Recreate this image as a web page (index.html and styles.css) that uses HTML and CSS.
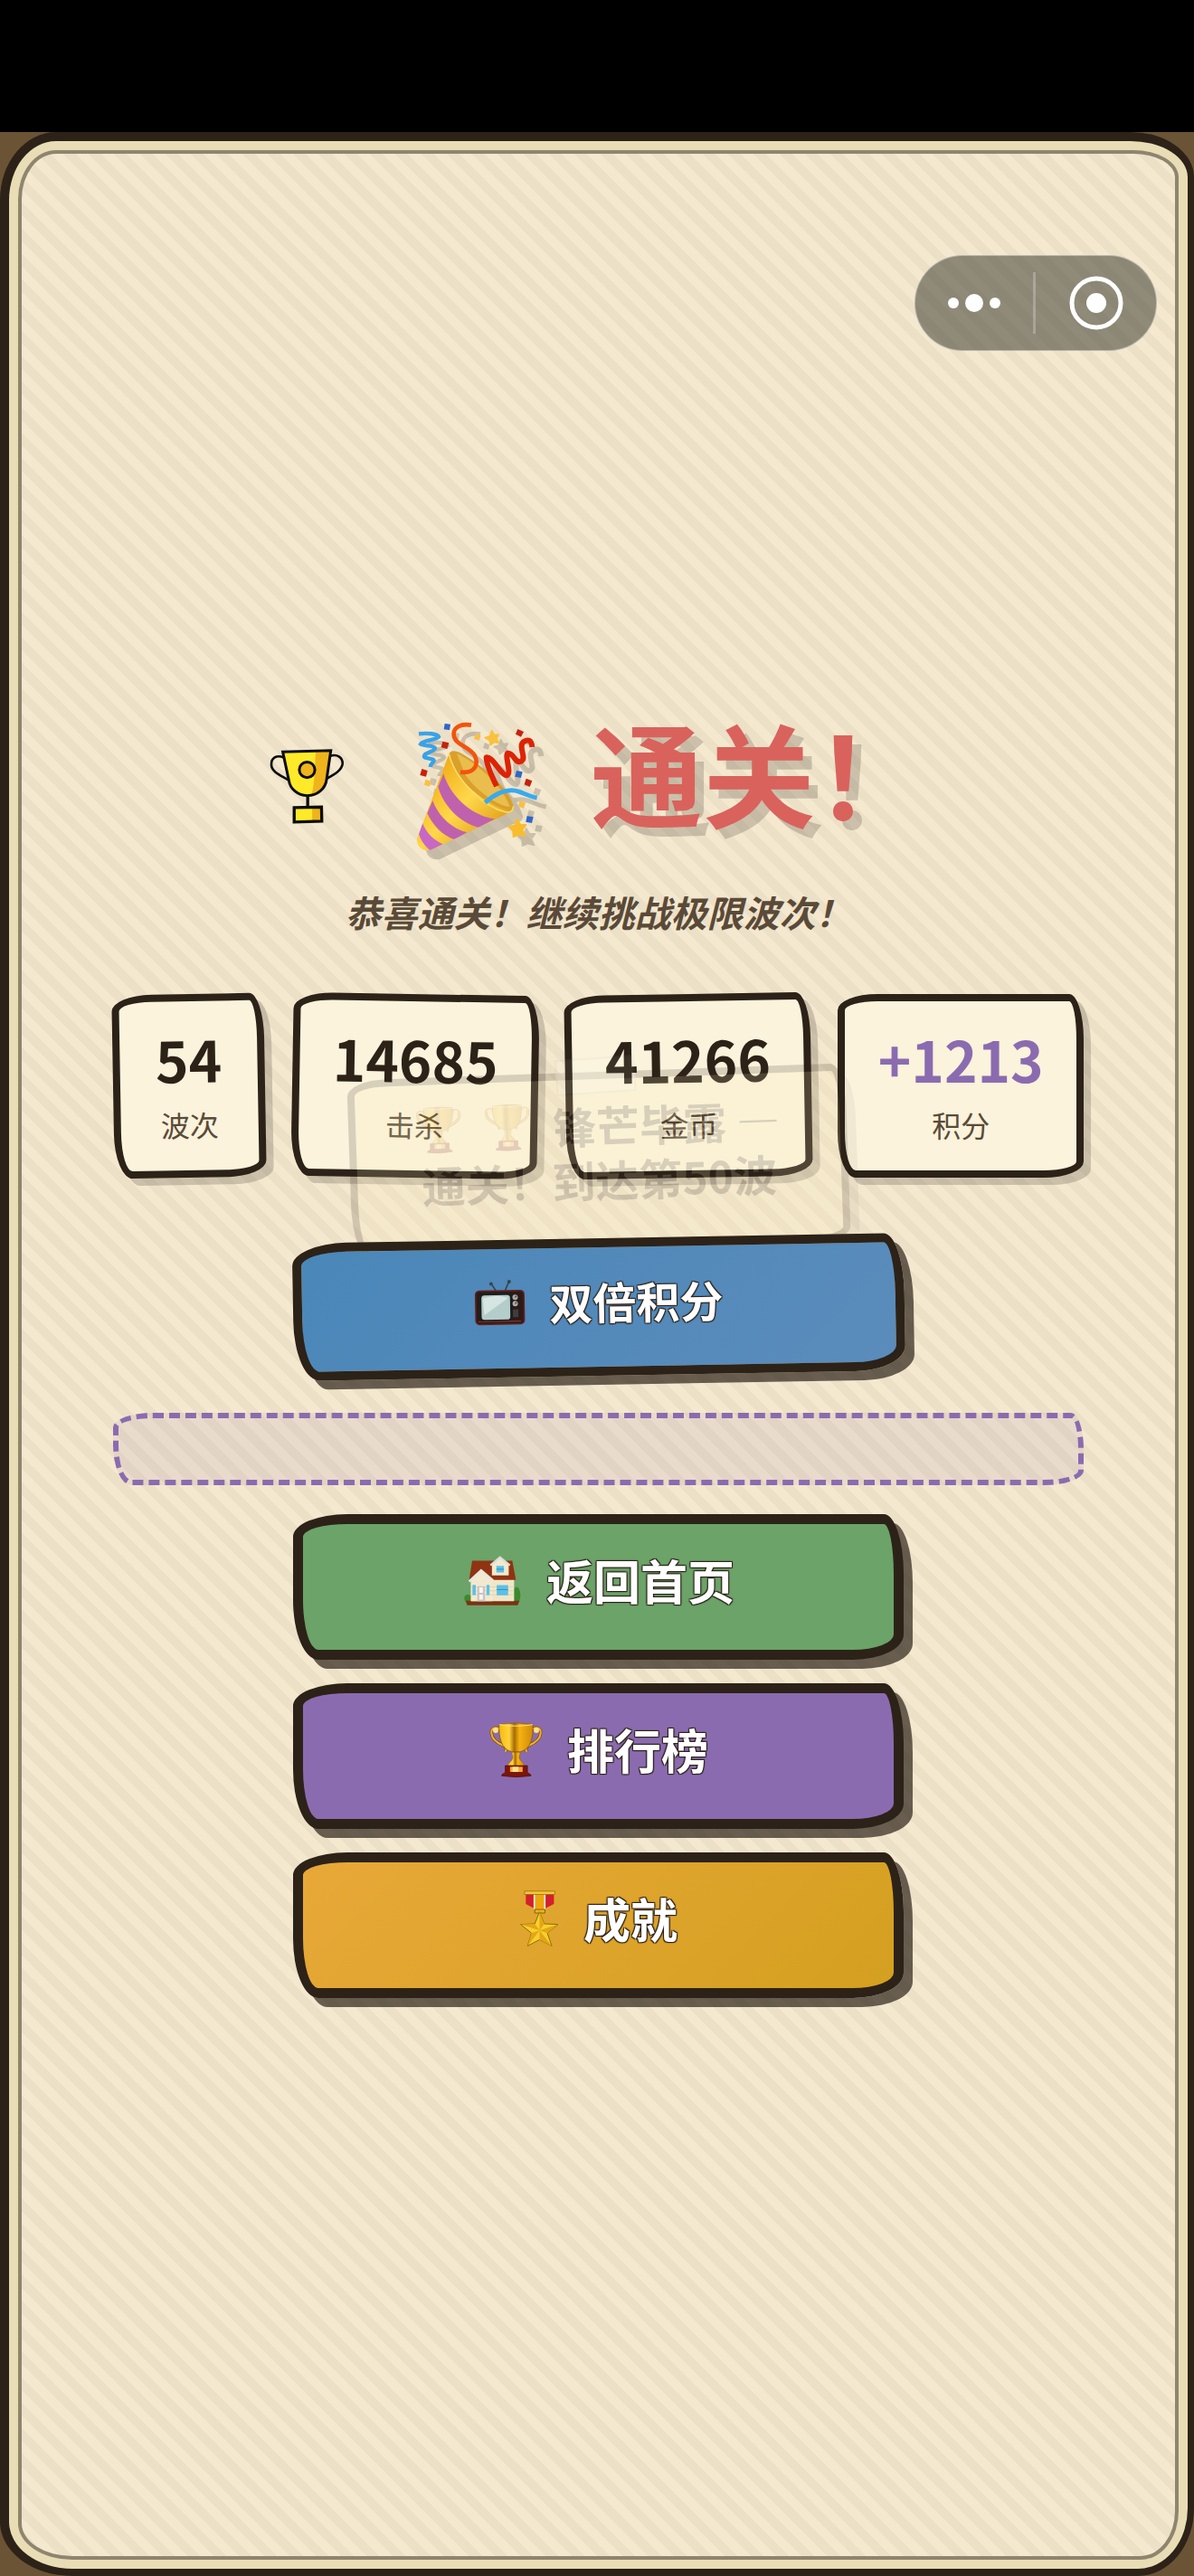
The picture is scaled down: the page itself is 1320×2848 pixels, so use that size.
FILE: index.html
```html
<!DOCTYPE html>
<html lang="zh-CN">
<head>
  <meta charset="UTF-8">
  <meta name="viewport" content="width=device-width, initial-scale=1.0">
  <title>通关！</title>
  <link rel="stylesheet" href="styles.css">
</head>
<body>

  <!-- Shared icon: gold cup -->
  <svg class="defs" width="0" height="0" aria-hidden="true">
    <defs>
      <linearGradient id="gold" x1="0" x2="1" y1="0" y2="0">
        <stop offset="0" stop-color="#f7b90f"/>
        <stop offset="0.3" stop-color="#ffd43a"/>
        <stop offset="0.45" stop-color="#a86a05"/>
        <stop offset="0.6" stop-color="#f5b310"/>
        <stop offset="1" stop-color="#d08a08"/>
      </linearGradient>
      <symbol id="cup" viewBox="712 734 184 190">
        <path d="M752 762c-14-12-32-6-30 12 2 22 20 32 38 40 12 6 14 14 8 22M856 762c14-12 32-6 30 12-2 22-20 32-38 40-12 6-14 14-8 22" fill="none" stroke="#7a4a08" stroke-width="10"/>
        <path d="M752 762c-14-12-32-6-30 12 2 22 20 32 38 40 12 6 14 14 8 22M856 762c14-12 32-6 30 12-2 22-20 32-38 40-12 6-14 14-8 22" fill="none" stroke="#f0b52a" stroke-width="6"/>
        <circle cx="736" cy="764" r="9" fill="#ffe08a"/>
        <circle cx="872" cy="764" r="9" fill="#ffe08a"/>
        <path d="M748 744q56-8 112 0c2 40-4 82-42 92h-28c-38-10-44-52-42-92z" fill="url(#gold)" stroke="#7a4a08" stroke-width="2"/>
        <path d="M748 745q56 10 112 0" fill="none" stroke="#ffe27a" stroke-width="3"/>
        <path d="M790 837h28c0 12-6 14-2 22 4 10 14 14 16 24h-56c2-10 12-14 16-24 4-8-2-10-2-22z" fill="url(#gold)" stroke="#9a6408" stroke-width="2"/>
        <path d="M768 882h74v24c6 2 12 4 12 10q-50 8-98 0c0-6 6-8 12-10z" fill="#7b150a" stroke="#4a0a05" stroke-width="2"/>
        <path d="M784 886h42v17h-42z" fill="#f3a83a"/>
        <path d="M792 886h20v17h-20z" fill="#ffe08a"/>
      </symbol>
    </defs>
  </svg>

  <div class="status-bar"></div>

  <main class="frame">
    <div class="sheet">

      <!-- Mini program capsule -->
      <div class="capsule">
        <button class="capsule-btn more" aria-label="更多">
          <svg width="60" height="60" viewBox="0 0 60 60"><circle cx="7" cy="30" r="6" fill="#fff"/><circle cx="30" cy="30" r="10" fill="#fff"/><circle cx="53" cy="30" r="6" fill="#fff"/></svg>
        </button>
        <button class="capsule-btn close" aria-label="关闭">
          <svg width="60" height="60" viewBox="0 0 60 60"><circle cx="30" cy="30" r="27" fill="none" stroke="#fff" stroke-width="5"/><circle cx="30" cy="30" r="11" fill="#fff"/></svg>
        </button>
      </div>

      <!-- Title -->
      <div class="title-row">
        <svg class="title-cup" width="83" height="86" viewBox="68 168 250 258" aria-hidden="true">
          <path d="M115 202c-24-10-42 2-41 24 0 24 32 36 58 52M270 197c24-8 42 6 41 26-2 22-28 36-54 50" fill="none" stroke="#0d0d0a" stroke-width="8"/>
          <path d="M112 183l160-4-14 96c-4 32-32 54-64 54s-58-22-62-52z" fill="#ffea29"/>
          <path d="M222 180l50-1-14 96c-4 32-26 46-52 53 12-20 12-90 16-148z" fill="#efb41c"/>
          <path d="M112 183l160-4-14 96c-4 32-32 54-64 54s-58-22-62-52z" fill="none" stroke="#0d0d0a" stroke-width="9"/>
          <circle cx="193" cy="243" r="26" fill="#efb41c" stroke="#0d0d0a" stroke-width="9"/>
          <path d="M195 330v36" stroke="#0d0d0a" stroke-width="10"/>
          <path d="M150 369l91-2 1 47-92 3z" fill="#ffea29"/>
          <path d="M210 368h31l1 46h-32z" fill="#efb41c"/>
          <path d="M150 369l91-2 1 47-92 3z" fill="none" stroke="#0d0d0a" stroke-width="10"/>
        </svg>
        <svg class="party" width="144" height="154" viewBox="552 81 432 462" aria-hidden="true">
          <defs>
            <linearGradient id="cone" x1="0" x2="1" y1="0" y2="1">
              <stop offset="0.2" stop-color="#f2b01e"/>
              <stop offset="0.5" stop-color="#ffd84a"/>
              <stop offset="0.9" stop-color="#d98f0c"/>
            </linearGradient>
            <clipPath id="coneClip"><path d="M664 190c20 80 110 170 212 190L604 510c-28 6-50-14-46-40z"/></clipPath>
          </defs>
          <path d="M664 190c8-14 30-10 60 10 70 44 140 110 153 160 4 20-6 28-26 26-80-8-180-110-187-196z" fill="#d9a02a"/>
          <path d="M690 190c50 20 150 100 176 176-40 0-120-60-150-110z" fill="#e9bd4e"/>
          <g clip-path="url(#coneClip)">
            <path d="M664 190c20 80 110 170 212 190L604 510c-28 6-50-14-46-40z" fill="url(#cone)"/>
            <path d="M646 256c20 70 90 140 170 150l-54 28c-60-14-116-70-134-134z" fill="#c061ae"/>
            <path d="M610 345c18 50 60 92 114 106l-40 24c-40-12-76-50-92-88z" fill="#c061ae"/>
            <path d="M576 420c14 34 38 56 68 70l-42 20c-16-12-30-30-38-54z" fill="#c868c4"/>
          </g>
          <path d="M664 190c20 84 110 176 190 194 16 2 24-6 23-20" fill="none" stroke="#fbd96a" stroke-width="5"/>
          <path d="M564 124c30-4 62 0 66 10-8 10-54 12-60 24 10 8 44 2 48 14-4 12-38 14-36 28 6 8 34 4 32 14-2 6-10 8-12 20" fill="none" stroke="#3aa2e8" stroke-width="13"/>
          <path d="M738 95c-36-6-60 8-58 32 2 34 52 38 70 70 14 30-2 60-48 54" fill="none" stroke="#f4530c" stroke-width="14"/>
          <path d="M822 298c-16-34-34-70-34-96 20-6 48 60 68 60 18-6-10-70 4-74 20 0 22 34 42 28 24-10-12-50 10-66 12-8 26-8 28 18" fill="none" stroke="#dd2306" stroke-width="18" stroke-linejoin="round"/>
          <path d="M784 352c40-36 80-48 114-36 20 8 36 16 58 20" fill="none" stroke="#38aaf0" stroke-width="15"/>
          <path d="M806 114l8 14 14-1-7 13 8 14-15-3-12 9-3-15-15-8 16-5z" fill="#f9c23e" stroke="#f9c23e" stroke-width="6" stroke-linejoin="round"/>
          <path d="M890 408l11 18 18 0-12 16 9 21-22-6-16 8-1-19-14-14 20-4z" fill="#f9bd2c" stroke="#f9bd2c" stroke-width="6" stroke-linejoin="round"/>
          <g fill="#2e66cc"><path d="M650 90l19 2-3 20-19-3zM888 246l20 4-5 20-20-4zM923 396l21 4-5 20-20-4z"/></g>
          <g fill="#c6220e"><path d="M643 149l21 5-6 20-20-5zM892 108l20 9-9 17-18-9zM574 240l19 6-5 20-20-5zM920 272l20 8-8 19-18-7z"/></g>
          <g fill="#f9bf45"><path d="M753 123l17 7-6 16-17-5zM586 275l19 6-5 18-18-6zM899 346l19 6-6 19-18-6z"/></g>
        </svg>
        <h1 class="title">通关！</h1>
      </div>
      <p class="subtitle">恭喜通关！继续挑战极限波次！</p>

      <!-- Stats -->
      <div class="stats">
        <div class="stat tilt-left">
          <span class="stat-value">54</span>
          <span class="stat-label">波次</span>
        </div>
        <div class="stat tilt-right">
          <span class="stat-value">14685</span>
          <span class="stat-label">击杀</span>
        </div>
        <div class="stat tilt-left">
          <span class="stat-value">41266</span>
          <span class="stat-label">金币</span>
        </div>
        <div class="stat">
          <span class="stat-value score">+1213</span>
          <span class="stat-label">积分</span>
        </div>

        <!-- Achievement toast, fading out -->
        <div class="toast">
          <div class="toast-line">
            <svg width="52" height="58" aria-hidden="true"><use href="#cup"/></svg>
            <svg width="52" height="58" aria-hidden="true"><use href="#cup"/></svg>
            <span>锋芒毕露 —</span>
          </div>
          <div class="toast-line">通关！到达第50波</div>
        </div>
      </div>

      <!-- Actions -->
      <button class="btn blue">
        <svg width="57" height="52" viewBox="676 200 171 156" aria-hidden="true">
          <path d="M750 240l-15-24M780 240l13-30" stroke="#37474b" stroke-width="5"/>
          <circle cx="734" cy="216" r="6" fill="#37474b"/><circle cx="794" cy="210" r="6" fill="#37474b"/>
          <rect x="682" y="240" width="160" height="110" rx="12" fill="#2b1a18" stroke="#5f211c" stroke-width="5"/>
          <path d="M690 341h142" stroke="#7c3029" stroke-width="4"/>
          <rect x="693" y="248" width="110" height="91" rx="8" fill="#1c1f1f"/>
          <rect x="701" y="254" width="95" height="81" rx="10" fill="#b4cdca"/>
          <path d="M706 264q44-14 84 0l-80 56z" fill="#d5e5e1"/>
          <circle cx="813" cy="262" r="9" fill="#a9aaa5"/><circle cx="813" cy="283" r="9" fill="#a9aaa5"/>
          <path d="M813 262l5-5M813 283l5-5" stroke="#333" stroke-width="3"/>
          <rect x="805" y="302" width="18" height="26" fill="#3e3e3c"/>
        </svg>
        双倍积分
      </button>

      <div class="bonus"></div>

      <div class="actions">
        <button class="btn green">
          <svg width="67" height="59" viewBox="622 180 200 178" aria-hidden="true">
            <circle cx="640" cy="328" r="12" fill="#3c8a2b"/><ellipse cx="802" cy="318" rx="13" ry="28" fill="#3c8a2b"/>
            <path d="M632 336h180l-6 15H638z" fill="#7b3213"/>
            <path d="M650 256h144v82H650z" fill="#efe6c8"/>
            <path d="M654 203h134l12 64H644z" fill="#8f3310"/>
            <path d="M720 214l27-22 29 22v38h-56z" fill="#f2e9ce"/>
            <path d="M715 218l32-27 33 27" fill="none" stroke="#dcdcd8" stroke-width="7"/>
            <path d="M650 268l34-32 38 32v70h-72z" fill="#f2e9ce"/>
            <path d="M644 272l40-37 40 34" fill="none" stroke="#e8e6e0" stroke-width="8"/>
            <path d="M650 290h144M650 303h144M650 316h144" stroke="#d8cca8" stroke-width="2"/>
            <path d="M735 220h25v22h-25zM736 284h38v34h-38zM655 283h11v34h-11zM702 283h10v34h-10z" fill="#5cc0e6"/>
            <path d="M735 231h25M736 299h38" stroke="#2f93c4" stroke-width="3"/>
            <path d="M671 288h26v50h-26z" fill="#c9c5c2"/><path d="M678 292h12v18h-12zM678 316h12v16h-12z" fill="#f7f5f2"/>
          </svg>
          返回首页
        </button>
        <button class="btn purple">
          <svg width="61" height="63" aria-hidden="true"><use href="#cup"/></svg>
          排行榜
        </button>
        <button class="btn orange">
          <svg width="45" height="64" viewBox="818 452 136 192" aria-hidden="true">
            <path d="M840 466h94v34l-36 18h-24l-34-18z" fill="#d3202c"/>
            <path d="M866 466h40v51h-40z" fill="#f3eee6"/><path d="M871 466h30v52h-30z" fill="#eda60c"/>
            <rect x="836" y="457" width="101" height="11" fill="#f3c73a" stroke="#8a6208" stroke-width="2"/>
            <path d="M870 518h34v12h-34z" fill="#e8b52a" stroke="#8a6208" stroke-width="3"/>
            <path d="M886 526l16 40 46 2-36 29 15 43-41-21-40 21 13-43-36-29 47-2z" fill="#f8cf2c" stroke="#8a6a08" stroke-width="3"/>
            <path d="M886 588v-62l16 40zM886 588l62-20-36 29zM886 588l41 52-41-21zM886 588l-40 52 13-43zM886 588l-63-20 47-2z" fill="#e2a616"/>
          </svg>
          成就
        </button>
      </div>

    </div>
  </main>

</body>
</html>
```
FILE: styles.css
```css
* {
  box-sizing: border-box;
}

body {
  display: flex;
  flex-direction: column;
  min-height: 100vh;
  margin: 0;
  background-color: #6b5335;
  color: #2c2218;
  font-family: "Noto Sans CJK SC", sans-serif;
}

.defs {
  position: absolute;
}

.status-bar {
  height: 146px;
  background-color: #000;
}

/* Hand-drawn paper frame */
.frame {
  flex: 1;
  display: flex;
  padding: 10px;
  background-color: #e9ddb5;
  border: 10px solid #2c2218;
  border-right-width: 7px;
  border-bottom-width: 8px;
  border-radius: 62px 70px 62px 80px / 75px 50px 75px 60px;
}

.sheet {
  position: relative;
  flex: 1;
  display: flex;
  flex-direction: column;
  align-items: center;
  justify-content: center;
  padding: 0 101px;
  background-color: #f4e8cf;
  background-image: repeating-linear-gradient(45deg, transparent 0 10px, #ece0c7 10px 20px);
  border: 4px solid #8f856f;
  border-radius: 42px 50px 42px 60px / 54px 30px 54px 40px;
}

/* Capsule */
.capsule {
  position: absolute;
  top: 112px;
  right: 20px;
  display: flex;
  align-items: center;
  width: 268px;
  height: 106px;
  background-color: rgba(44, 44, 36, 0.5);
  border: 1px solid rgba(255, 255, 255, 0.4);
  border-radius: 53px;
}

.capsule-btn {
  height: 68px;
  padding: 4px 0;
  background: none;
  border: none;
  cursor: pointer;
}

.more {
  width: 130px;
}

.close {
  flex: 1;
  border-left: 3px solid rgba(255, 255, 255, 0.25);
}

/* Title */
.title-row {
  display: flex;
  align-items: center;
  height: 172px;
}

.title-cup {
  margin: 0 78px 10px 0;
}

.party {
  margin-right: 50px;
  overflow: visible;
  filter: drop-shadow(10px 10px 0 rgba(44, 34, 24, 0.2));
}

.title {
  align-self: flex-start;
  margin: 0;
  font-size: 124px;
  font-weight: 700;
  line-height: 128px;
  color: #d9625c;
  text-shadow: 10px 10px 0 rgba(44, 34, 24, 0.2);
}

.subtitle {
  margin: 24px 0 67px;
  font-size: 40px;
  font-weight: 700;
  font-style: italic;
  line-height: 48px;
  color: #5a4a38;
}

/* Stats */
.stats {
  position: relative;
  align-self: stretch;
  display: flex;
  gap: 30px;
  margin-bottom: 67px;
}

.stat {
  flex: 1 1 auto;
  display: flex;
  flex-direction: column;
  align-items: center;
  min-width: 168px;
  padding: 27px 32px 31px;
  background-color: #fbf3dc;
  border: 8px solid #2c2218;
  border-radius: 44px 16px 44px 20px / 18px 50px 18px 50px;
  box-shadow: 8px 8px 0 rgba(44, 34, 24, 0.2);
}

.tilt-left {
  transform: rotate(-1deg);
}

.tilt-right {
  transform: rotate(1deg);
}

.stat-value {
  font-size: 62px;
  font-weight: 700;
  line-height: 72px;
}

.score {
  color: #8b6bb0;
}

.stat-label {
  margin-top: 17px;
  font-size: 32px;
  line-height: 40px;
  color: #5a4a38;
}

.toast {
  position: absolute;
  top: 86px;
  left: 50%;
  padding: 20px 66px 42px;
  background-color: #fff0bc;
  border: 8px solid #2c2218;
  border-radius: 44px 16px 44px 20px / 18px 50px 18px 60px;
  box-shadow: 10px 10px 0 rgba(44, 34, 24, 0.3);
  font-size: 48px;
  font-weight: 700;
  line-height: 60px;
  white-space: nowrap;
  opacity: 0.17;
  transform: translateX(-50%) rotate(-2deg);
  pointer-events: none;
}

.toast::before {
  content: "";
  position: absolute;
  top: -24px;
  left: 50%;
  width: 84px;
  height: 36px;
  background-color: rgba(255, 255, 255, 0.4);
  border: 2px solid rgba(44, 34, 24, 0.2);
  transform: translateX(-50%) rotate(-2deg);
}

.toast-line {
  display: flex;
  align-items: center;
  justify-content: center;
  gap: 24px;
}

/* Buttons */
.btn {
  display: flex;
  align-items: center;
  justify-content: center;
  gap: 26px;
  width: 63%;
  height: 161px;
  padding: 0 0 14px;
  border: 11px solid #2c2218;
  border-radius: 60px 22px 56px 28px / 25px 66px 28px 66px;
  box-shadow: 10px 10px 0 rgba(44, 34, 24, 0.7);
  color: #fff;
  font-family: inherit;
  font-size: 52px;
  font-weight: 700;
  line-height: 60px;
  text-shadow: 1px 1px 1px #2c2218, -1px -1px 1px #2c2218, 1px -1px 1px #2c2218, -1px 1px 1px #2c2218;
  cursor: pointer;
}

.blue {
  height: 152px;
  border-width: 10px;
  background: linear-gradient(135deg, #4a87b9, #5b8cbb);
  font-size: 48px;
  transform: rotate(-1deg);
}

.green {
  background-color: #6ba368;
}

.purple {
  background-color: #8b6bb0;
}

.orange {
  background: linear-gradient(135deg, #e8a838, #d4a020);
}

.bonus {
  align-self: stretch;
  height: 80px;
  margin: 41px 0 32px;
  background-color: rgba(139, 107, 176, 0.1);
  border: 6px dashed #8b6bb0;
  border-radius: 44px 14px 44px 20px / 16px 40px 16px 45px;
}

.actions {
  align-self: stretch;
  display: flex;
  flex-direction: column;
  align-items: center;
  gap: 26px;
}
```
